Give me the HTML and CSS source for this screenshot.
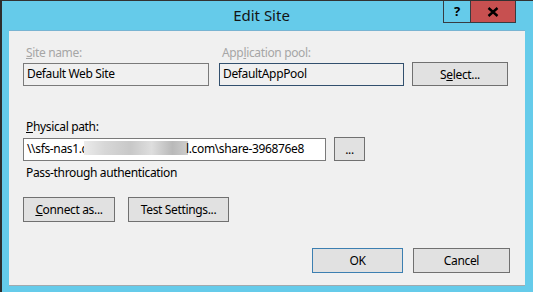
FILE: index.html
```html
<html>
    <head>
        <link rel="stylesheet" href="styles.css">
    </head>
    <body>
        <div class="window">
            <div class="titlebar">
                <span class="title">Edit Site</span>
                <div class="controls">
                    <span class="helpbtn">?</span>
                    <span class="closebtn">
                        <svg width="12" height="10" viewBox="0 0 12 10">
                            <path d="M1.5 1 L10.5 9 M10.5 1 L1.5 9" stroke="#000" stroke-width="2.4"/>
                        </svg>
                    </span>
                </div>
            </div>
            <div class="content">
                <div class="row toprow">
                    <div class="field sitefield">
                        <div class="label disabled"><u>S</u>ite name:</div>
                        <div class="textbox readonly">Default Web Site</div>
                    </div>
                    <div class="field poolfield">
                        <div class="label disabled">App<u>l</u>ication pool:</div>
                        <div class="textbox readonly focusbox">DefaultAppPool</div>
                    </div>
                    <button class="winbutton selectbutton">S<u>e</u>lect...</button>
                </div>
                <div class="label pathlabel"><u>P</u>hysical path:</div>
                <div class="row pathrow">
                    <div class="textbox pathbox">\\sfs-nas1.c<span class="blur"></span>l.com\share-396876e8</div>
                    <button class="winbutton dotsbutton">...</button>
                </div>
                <div class="label authlabel">Pass-through authentication</div>
                <div class="row authrow">
                    <button class="winbutton connectbutton"><u>C</u>onnect as...</button>
                    <button class="winbutton testbutton">Test Settings...</button>
                </div>
                <div class="row bottomrow">
                    <button class="winbutton okbutton">OK</button>
                    <button class="winbutton cancelbutton">Cancel</button>
                </div>
            </div>
        </div>
    </body>
</html>
```

FILE: styles.css
```css
body {
    margin: 0px;
    background-color: rgb(101,203,234);
    font-family: "Noto Sans", "Open Sans", sans-serif;
    font-size: 12px;
    letter-spacing: -0.35px;
    color: black;
}
.window {
    width: 533px;
    height: 292px;
    box-sizing: border-box;
    border-top: 1px solid rgb(50,50,50);
    border-left: 2px solid rgb(45,45,45);
    background-color: rgb(101,203,234);
    position: relative;
}
.titlebar {
    height: 29px;
    text-align: center;
}
.title {
    display: inline-block;
    font-size: 15px;
    letter-spacing: 0px;
    line-height: 29px;
    padding-right: 12px;
    color: rgb(20,20,20);
}
.controls {
    position: absolute;
    top: 0px;
    right: 17px;
    display: flex;
    height: 21px;
    border: 1px solid rgb(55,60,65);
    border-top: 0px;
}
.helpbtn {
    width: 26px;
    text-align: center;
    font-weight: bold;
    font-size: 13px;
    line-height: 20px;
    border-right: 1px solid rgb(55,60,65);
}
.closebtn {
    width: 44px;
    background-color: rgb(199,80,80);
    display: flex;
    align-items: center;
    justify-content: center;
}
.content {
    margin-left: 7px;
    width: 516px;
    height: 256px;
    box-sizing: border-box;
    background-color: rgb(240,240,240);
    border-top: 1px solid rgb(120,180,210);
    border-bottom: 1px solid rgb(160,170,175);
    padding: 14px 0px 0px 14px;
}
.row {
    display: flex;
    align-items: flex-end;
}
.label {
    line-height: 15px;
    padding-left: 3px;
    padding-bottom: 3px;
}
.disabled {
    color: rgb(166,166,166);
}
.textbox {
    height: 23px;
    box-sizing: border-box;
    border: 1px solid rgb(122,122,122);
    background-color: white;
    line-height: 20px;
    padding-left: 3px;
    white-space: nowrap;
    overflow: hidden;
}
.readonly {
    background-color: rgb(240,240,240);
}
.focusbox {
    border-color: rgb(50,80,110);
}
.sitefield {
    width: 186px;
}
.poolfield {
    width: 185px;
    margin-left: 10px;
}
.winbutton {
    box-sizing: border-box;
    background-color: rgb(225,225,225);
    border: 1px solid rgb(112,112,112);
    font-family: "Noto Sans", "Open Sans", sans-serif;
    font-size: 12px;
    letter-spacing: -0.35px;
    color: black;
    padding: 0px;
    margin: 0px;
}
.selectbutton {
    width: 96px;
    height: 24px;
    margin-left: 8px;
}
.pathlabel {
    margin-top: 33px;
}
.pathbox {
    width: 303px;
}
.blur {
    display: inline-block;
    width: 104px;
    height: 14px;
    vertical-align: -2px;
    margin-left: -3px;
    margin-right: -2px;
    background: linear-gradient(90deg, rgb(235,235,235) 0%, rgb(215,215,215) 20%, rgb(200,200,200) 45%, rgb(222,222,222) 65%, rgb(185,185,185) 85%, rgb(205,205,205) 100%);
}
.dotsbutton {
    width: 31px;
    height: 24px;
    margin-left: 8px;
}
.authlabel {
    margin-top: 4px;
    padding-left: 3px;
}
.authrow {
    margin-top: 14px;
}
.connectbutton {
    width: 92px;
    height: 25px;
}
.testbutton {
    width: 101px;
    height: 25px;
    margin-left: 13px;
}
.bottomrow {
    margin-top: 26px;
    justify-content: flex-end;
    padding-right: 15px;
}
.okbutton {
    width: 91px;
    height: 25px;
    border-color: rgb(60,127,177);
}
.cancelbutton {
    width: 97px;
    height: 25px;
    margin-left: 10px;
}
```
